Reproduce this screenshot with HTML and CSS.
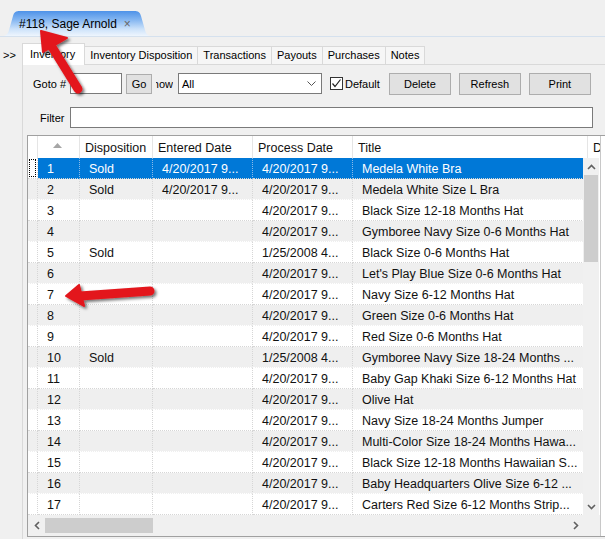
FILE: index.html
```html
<!DOCTYPE html>
<html lang="en">
    <head>
        <meta charset="UTF-8">
        <meta name="viewport" content="width=device-width, initial-scale=1.0">
        <title>Inventory</title>

        <link rel="stylesheet" href="styles.css">

    </head>
    <body>
        <div class="doc-tabs">
            <div class="doc-tab"><span>#118, Sage Arnold</span><span class="close">&times;</span></div>
        </div>

        <div class="main">
            <div class="side">&gt;&gt;</div>
            <div class="content">
                <div class="tabs">
                    <div class="tab active">Inventory</div>
                    <div class="tab">Inventory Disposition</div>
                    <div class="tab">Transactions</div>
                    <div class="tab">Payouts</div>
                    <div class="tab">Purchases</div>
                    <div class="tab">Notes</div>
                </div>

                <div class="panel">
                    <div class="toolbar">
                        <span class="goto-label">Goto #</span>
                        <input class="field goto-field" type="text">
                        <button class="btn go">Go</button>
                        <span class="show"><span>Show</span></span>
                        <div class="field select">
                            <span>All</span>
                            <svg width="9" height="5" viewBox="0 0 9 5"><polyline points="0.5,0.5 4.5,4.5 8.5,0.5" fill="none" stroke="#555" stroke-width="1"/></svg>
                        </div>
                        <label class="check">
                            <span class="box"><svg width="11" height="11" viewBox="0 0 11 11"><polyline points="1.5,5.5 4,8.5 9.5,1.5" fill="none" stroke="#222" stroke-width="1.2"/></svg></span>
                            Default
                        </label>
                        <button class="btn action delete">Delete</button>
                        <button class="btn action">Refresh</button>
                        <button class="btn action">Print</button>
                    </div>

                    <div class="filter-row">
                        <span class="filter-label">Filter</span>
                        <input class="field filter-field" type="text">
                    </div>

                    <div class="grid">
                        <div class="grid-main">
                            <div class="grid-head">
                                <div class="hcell"></div>
                                <div class="hcell sort"><svg width="9" height="5" viewBox="0 0 9 5"><polygon points="0,5 4.5,0 9,5" fill="#a6a6a6"/></svg></div>
                                <div class="hcell">Disposition</div>
                                <div class="hcell">Entered Date</div>
                                <div class="hcell">Process Date</div>
                                <div class="hcell">Title</div>
                                <div class="hcell">Description</div>
                            </div>
                            <div class="grid-body">
                                <div class="rows" id="rows"></div>
                                <div class="vscroll">
                                    <div class="sbtn"><svg width="9" height="6" viewBox="0 0 9 6"><polyline points="1,5 4.5,1.5 8,5" fill="none" stroke="#606060" stroke-width="1.6"/></svg></div>
                                    <div class="vthumb"></div>
                                    <div class="strack"></div>
                                    <div class="sbtn"><svg width="9" height="6" viewBox="0 0 9 6"><polyline points="1,1 4.5,4.5 8,1" fill="none" stroke="#606060" stroke-width="1.6"/></svg></div>
                                </div>
                            </div>
                            <div class="hscroll">
                                <div class="sbtn"><svg width="6" height="9" viewBox="0 0 6 9"><polyline points="5,1 1.5,4.5 5,8" fill="none" stroke="#606060" stroke-width="1.6"/></svg></div>
                                <div class="hthumb"></div>
                                <div class="strack"></div>
                                <div class="sbtn"><svg width="6" height="9" viewBox="0 0 6 9"><polyline points="1,1 4.5,4.5 1,8" fill="none" stroke="#606060" stroke-width="1.6"/></svg></div>
                                <div class="corner"></div>
                            </div>
                        </div>
                    </div>
                </div>
            </div>
        </div>

        <!-- annotation arrows drawn over the screenshot -->
        <svg class="marks" width="605" height="539" viewBox="0 0 605 539">
            <defs>
                <filter id="shadow" x="-30%" y="-30%" width="160%" height="160%">
                    <feDropShadow dx="2" dy="2" stdDeviation="1.5" flood-color="#000" flood-opacity="0.55"/>
                </filter>
            </defs>
            <g filter="url(#shadow)" fill="#e3151b" stroke="#e3151b">
                <line x1="52" y1="47" x2="78" y2="89" stroke-width="9" stroke-linecap="round"/>
                <polygon points="41,31 67,38 43,52" stroke-width="2" stroke-linejoin="round"/>
                <line x1="80" y1="296" x2="150" y2="291" stroke-width="9" stroke-linecap="round"/>
                <polygon points="66,296 79,285 84,306" stroke-width="2" stroke-linejoin="round"/>
            </g>
        </svg>

        <script>
            const data = [
                ['1', 'Sold', '4/20/2017 9...', '4/20/2017 9...', 'Medela White Bra'],
                ['2', 'Sold', '4/20/2017 9...', '4/20/2017 9...', 'Medela White Size L Bra'],
                ['3', '', '', '4/20/2017 9...', 'Black Size 12-18 Months Hat'],
                ['4', '', '', '4/20/2017 9...', 'Gymboree Navy Size 0-6 Months Hat'],
                ['5', 'Sold', '', '1/25/2008 4...', 'Black Size 0-6 Months Hat'],
                ['6', '', '', '4/20/2017 9...', "Let's Play Blue Size 0-6 Months Hat"],
                ['7', '', '', '4/20/2017 9...', 'Navy Size 6-12 Months Hat'],
                ['8', '', '', '4/20/2017 9...', 'Green Size 0-6 Months Hat'],
                ['9', '', '', '4/20/2017 9...', 'Red Size 0-6 Months Hat'],
                ['10', 'Sold', '', '1/25/2008 4...', 'Gymboree Navy Size 18-24 Months ...'],
                ['11', '', '', '4/20/2017 9...', 'Baby Gap Khaki Size 6-12 Months Hat'],
                ['12', '', '', '4/20/2017 9...', 'Olive Hat'],
                ['13', '', '', '4/20/2017 9...', 'Navy Size 18-24 Months Jumper'],
                ['14', '', '', '4/20/2017 9...', 'Multi-Color Size 18-24 Months Hawa...'],
                ['15', '', '', '4/20/2017 9...', 'Black Size 12-18 Months Hawaiian S...'],
                ['16', '', '', '4/20/2017 9...', 'Baby Headquarters Olive Size 6-12 ...'],
                ['17', '', '', '4/20/2017 9...', 'Carters Red Size 6-12 Months Strip...']
            ]

            const rows = document.getElementById('rows')
            data.forEach((item, i) => {
                const row = document.createElement('div')
                row.className = 'row'
                if (i === 0) row.classList.add('selected')
                if (i % 2 === 1) row.classList.add('alt')

                const rh = document.createElement('div')
                rh.className = 'cell rh'
                if (i === 0) rh.innerHTML = '<span class="focus"></span>'
                row.appendChild(rh)

                item.forEach(text => {
                    const cell = document.createElement('div')
                    cell.className = 'cell'
                    cell.textContent = text
                    row.appendChild(cell)
                })
                rows.appendChild(row)
            })
        </script>
    </body>
</html>
```

FILE: styles.css
```css
body {
    margin: 0;
    width: 605px;
    height: 539px;
    overflow: hidden;
    position: relative;
    background-color: #f0f0f0;
    color: #000;
    font-family: "Liberation Sans", Arial, sans-serif;
    font-size: 11px;
}

/* document tab on top */
.doc-tabs {
    height: 36px;
    border-bottom: 1px solid #d5e1ee;
    display: flex;
    align-items: flex-end;
    padding-left: 2px;
}

.doc-tab {
    width: 150px;
    height: 25px;
    box-sizing: border-box;
    padding-left: 17px;
    display: flex;
    align-items: center;
    gap: 7px;
    font-size: 12px;
    background: linear-gradient(to bottom, #4e92e8 0%, #84b6f1 35%, #cce2fa 72%, #eef5fd 100%);
    clip-path: path('M0 25 C4 25 6 23 7 19 L11 5 C12 1 14 0 18 0 L132 0 C136 0 138 1 139 5 L143 19 C144 23 146 25 150 25 Z');
}

.doc-tab .close {
    color: #666;
    font-size: 12px;
}

.main {
    display: flex;
    height: 502px;
}

.side {
    width: 22px;
    box-sizing: border-box;
    padding: 12px 0 0 3px;
}

.content {
    flex: 1;
    min-width: 0;
    display: flex;
    flex-direction: column;
}

/* inner tabs */
.tabs {
    height: 27px;
    display: flex;
    align-items: flex-end;
}

.tab {
    height: 18px;
    box-sizing: border-box;
    line-height: 17px;
    padding: 0 5px;
    border: 1px solid #d9d9d9;
    border-bottom: none;
    margin-left: -1px;
    background-color: #f6f6f6;
}

.tab.active {
    height: 22px;
    line-height: 20px;
    padding: 0 9px 0 7px;
    margin-left: 0;
    margin-bottom: -1px;
    background-color: #fff;
    position: relative;
    z-index: 1;
}

.panel {
    flex: 1;
    border-left: 1px solid #d9d9d9;
    border-top: 1px solid #d9d9d9;
    padding-top: 8px;
}

/* toolbar */
.toolbar {
    display: flex;
    align-items: center;
    height: 21px;
    padding-left: 10px;
}

.goto-label {
    width: 37px;
}

.field {
    height: 21px;
    box-sizing: border-box;
    border: 1px solid #7a7a7a;
    background-color: #fff;
    margin: 0;
    font: inherit;
}

.goto-field {
    width: 52px;
}

.btn {
    font: inherit;
    color: #000;
    height: 20px;
    box-sizing: border-box;
    border: 1px solid #adadad;
    background-color: #e1e1e1;
    padding: 0;
    margin: 0;
}

.go {
    width: 26px;
    margin-left: 4px;
}

.show {
    width: 17px;
    margin-left: 4px;
    display: flex;
    justify-content: flex-end;
    overflow: hidden;
    white-space: nowrap;
}

.show span {
    flex-shrink: 0;
}

.select {
    width: 144px;
    margin-left: 5px;
    display: flex;
    align-items: center;
    justify-content: space-between;
    padding: 0 5px 0 3px;
}

.check {
    margin-left: 8px;
    display: flex;
    align-items: center;
    gap: 2px;
}

.box {
    width: 13px;
    height: 13px;
    box-sizing: border-box;
    border: 1px solid #333;
    background-color: #fff;
    display: flex;
}

.action {
    width: 62px;
    height: 22px;
    margin-left: 8px;
}

.action.delete {
    margin-left: 9px;
}

/* filter */
.filter-row {
    display: flex;
    align-items: center;
    height: 21px;
    margin-top: 13px;
    padding-left: 17px;
}

.filter-label {
    width: 30px;
}

.filter-field {
    width: 523px;
}

/* grid */
.grid {
    margin: 7px 0 0 4px;
    width: 640px;
    height: 402px;
    box-sizing: border-box;
    border: 1px solid #a0a0a0;
    border-right: none;
    background-color: #fff;
    font-size: 12.5px;
    color: #111;
    display: flex;
}

.grid-main {
    width: 572px;
    border-right: 1px solid #c8c8c8;
    display: flex;
    flex-direction: column;
}

.grid-head {
    height: 22px;
    display: grid;
    grid-template-columns: 10px 42px 73px 100px 100px 235px 40px;
    overflow: hidden;
}

.hcell {
    box-sizing: border-box;
    border-right: 1px solid #e5e5e5;
    padding: 1px 0 0 5px;
    display: flex;
    align-items: center;
    white-space: nowrap;
    overflow: hidden;
}

.hcell.sort {
    padding: 0 0 3px 15px;
}

.grid-body {
    height: 357px;
    display: flex;
}

.rows {
    width: 555px;
    overflow: hidden;
}

.row {
    display: grid;
    grid-template-columns: 10px 42px 73px 100px 100px 235px;
    height: 21px;
}

.cell {
    box-sizing: border-box;
    border-right: 1px dotted #d6d6d6;
    border-bottom: 1px dotted #d6d6d6;
    padding: 1px 0 0 9px;
    display: flex;
    align-items: center;
    white-space: nowrap;
    overflow: hidden;
}

.cell.rh {
    padding: 0 0 0 1px;
}

.row.alt .cell {
    background-color: #efefef;
    border-bottom-color: #fff;
}

.row.selected .cell:not(.rh) {
    background-color: #0078d7;
    color: #fff;
    border-right-color: #8cbbe8;
}

.focus {
    width: 7px;
    height: 18px;
    box-sizing: border-box;
    border: 1px dotted #000;
}

/* scrollbars */
.vscroll {
    width: 16px;
    background-color: #f0f0f0;
    display: flex;
    flex-direction: column;
}

.sbtn {
    width: 17px;
    height: 17px;
    display: flex;
    align-items: center;
    justify-content: center;
    flex-shrink: 0;
}

.vscroll .sbtn {
    width: 16px;
}

.vthumb {
    height: 87px;
    margin: 0 1px;
    background-color: #cdcdcd;
}

.strack {
    flex: 1;
}

.hscroll {
    height: 21px;
    background-color: #f0f0f0;
    display: flex;
    align-items: center;
}

.hscroll .sbtn {
    height: 21px;
}

.hthumb {
    width: 108px;
    height: 15px;
    background-color: #cdcdcd;
}

.corner {
    width: 16px;
}

/* annotation arrows */
.marks {
    position: absolute;
    top: 0;
    left: 0;
    z-index: 2;
    pointer-events: none;
}
```
